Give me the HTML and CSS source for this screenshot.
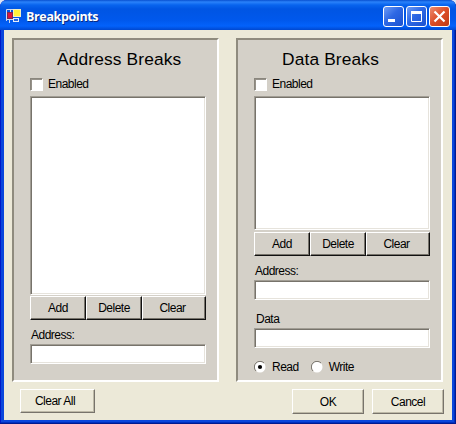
FILE: index.html
```html
<!DOCTYPE html>
<html lang="en">
<head>
<meta charset="utf-8">
<title>Breakpoints</title>
<link rel="stylesheet" href="styles.css">
</head>
<body>
<div class="window">
  <header class="titlebar">
    <svg class="app-icon" width="16" height="16" viewBox="0 0 16 16">
      <path d="M0.5 13V1.5H7M0.5 4.5H6M4.5 1v3M0.5 11.5H7M3.5 12v3" fill="none" stroke="#cfdaf0"/>
      <rect x="1.5" y="4.5" width="5" height="6" fill="#d9143c" stroke="#7a2850"/>
      <rect x="7.5" y="1.5" width="7" height="7" fill="#fff33b" stroke="#f4f0c0"/>
      <rect x="7.5" y="10.5" width="5" height="3" fill="#2465dd" stroke="#e7edfa"/>
    </svg>
    <h1 class="title">Breakpoints</h1>
    <div class="controls">
      <svg class="control" viewBox="1 1 19 19"><path d="M5 14.5h7" stroke="#fff" stroke-width="3"/></svg>
      <svg class="control" viewBox="1 1 19 19"><path d="M5.5 5v10.5h10V5" fill="none" stroke="#fff"/><path d="M5 6.5h11" stroke="#fff" stroke-width="3"/></svg>
      <svg class="control close" viewBox="1 1 19 19"><path d="M5.5 5.5l10 10M15.5 5.5l-10 10" stroke="#fff" stroke-width="2.2"/></svg>
    </div>
  </header>
  <main class="client">
    <div class="panels">
      <section class="panel">
        <h2 class="heading address-heading">Address Breaks</h2>
        <label class="check"><span class="box"></span>Enabled</label>
        <div class="list tall"></div>
        <div class="actions"><button>Add</button><button>Delete</button><button class="wide">Clear</button></div>
        <label class="label">Address:</label>
        <div class="field"></div>
      </section>
      <section class="panel">
        <h2 class="heading data-heading">Data Breaks</h2>
        <label class="check"><span class="box"></span>Enabled</label>
        <div class="list short"></div>
        <div class="actions spaced"><button>Add</button><button>Delete</button><button class="wide">Clear</button></div>
        <label class="label">Address:</label>
        <div class="field"></div>
        <label class="label data-label">Data</label>
        <div class="field"></div>
        <div class="radios">
          <label class="option"><svg width="12" height="12" viewBox="0 0 12 12"><circle cx="6" cy="6" r="5.5" fill="#fff"/><path d="M2 10A5.5 5.5 0 0 1 10 2" fill="none" stroke="#77736b"/><circle cx="6" cy="6" r="2.1"/></svg>Read</label>
          <label class="option"><svg width="12" height="12" viewBox="0 0 12 12"><circle cx="6" cy="6" r="5.5" fill="#fff"/><path d="M2 10A5.5 5.5 0 0 1 10 2" fill="none" stroke="#77736b"/></svg>Write</label>
        </div>
      </section>
    </div>
    <footer class="footer">
      <button class="dialog-button clear-all">Clear All</button>
      <button class="dialog-button">OK</button>
      <button class="dialog-button">Cancel</button>
    </footer>
  </main>
</div>
</body>
</html>
```
FILE: styles.css
```css
* { box-sizing: border-box; }
html { background: #dce4f4; }
body { margin: 0; font: 12px/14px "Liberation Sans", sans-serif; letter-spacing: -0.5px; color: #000; }
.window {
  width: 456px; height: 424px; overflow: hidden;
  display: flex; flex-direction: column;
  border-radius: 7px 7px 0 0;
  background: #0a46dc;
  box-shadow: inset -1px -1px #001a90, inset 1px 0 #0019c8, inset -2px -2px #0030c0;
}
.titlebar {
  height: 30px; flex: none; display: flex; align-items: flex-start; padding: 6px 6px 0;
  background: linear-gradient(#0850d0 0, #2a82fa 2px, #0864ee 5px, #0055e3 9px, #0058ec 20px, #0362fb 26px, #0048d0 30px);
}
.app-icon { margin-top: 2px; }
.title {
  margin: 3px 0 0 4px; flex: 1; color: #fff;
  font: bold 12.5px/16px "Open Sans", sans-serif; letter-spacing: -0.35px;
  text-shadow: 1px 1px #0a2a80;
}
.controls { display: flex; gap: 2px; }
.control { width: 21px; height: 21px; border: 1px solid #fff; border-radius: 3px; background: linear-gradient(135deg, #6e9cf5, #2e68e4 45%, #1b51d0); }
.close { background: linear-gradient(135deg, #ed8c70, #dc4d26 50%, #c13a15); }
.client { flex: 1; margin: 0 4px 4px; padding: 8px 8px 0; background: #ece9d8; }
.panels { display: flex; gap: 17px; }
.panel {
  width: 207px; height: 344px; padding: 9px 12px 0 16px;
  background: #d4d0c8; border: 2px solid; border-color: #8f8b7e #fff #fff #8f8b7e;
}
.heading { margin: 0; font: 17.33px/20px "Liberation Sans", sans-serif; white-space: nowrap; }
.address-heading { padding-left: 27px; letter-spacing: 0.15px; }
.data-heading { padding-left: 28px; letter-spacing: 0.15px; }
.check { display: flex; align-items: center; gap: 5px; height: 14px; margin-top: 8px; }
.box { width: 13px; height: 13px; background: #fff; border: 1px solid; border-color: #8a867d #fff #fff #8a867d; box-shadow: inset 1px 1px #96928a; }
.list, .field {
  width: 176px; background: #fff; border: 1px solid;
  border-color: #a19d94 #fff #fff #a19d94;
  box-shadow: inset 1px 1px #77736b, inset -1px -1px #e6e3dc;
}
.list { margin-top: 5px; }
.tall { height: 199px; }
.short { height: 134px; }
.actions { display: flex; width: 176px; height: 24px; margin-top: 1px; }
.spaced { margin-top: 2px; }
button { font: inherit; letter-spacing: inherit; color: inherit; padding: 0; }
.actions button {
  width: 56px; background: #d4d0c8; border: 1px solid;
  border-color: #fff #111 #111 #fff; box-shadow: inset -1px -1px #77736b;
}
.actions .wide { width: 64px; padding-right: 3px; }
.label { display: block; height: 14px; margin: 8px 0 2px 1px; }
.field { height: 20px; }
.data-label { margin: 12px 0 2px 2px; }
.radios { display: flex; gap: 12px; margin-top: 12px; }
.option { display: flex; align-items: center; gap: 6px; height: 14px; }
.footer { display: flex; gap: 8px; padding: 7px 0 0 8px; }
.dialog-button {
  width: 72px; height: 25px; background: #ece9d8; border: 1px solid;
  border-color: #fff #77736b #77736b #fff; box-shadow: inset -1px -1px #bdb9a7;
}
.clear-all { width: 75px; height: 24px; margin-right: auto; padding: 0 5px 1px 0; }
```
